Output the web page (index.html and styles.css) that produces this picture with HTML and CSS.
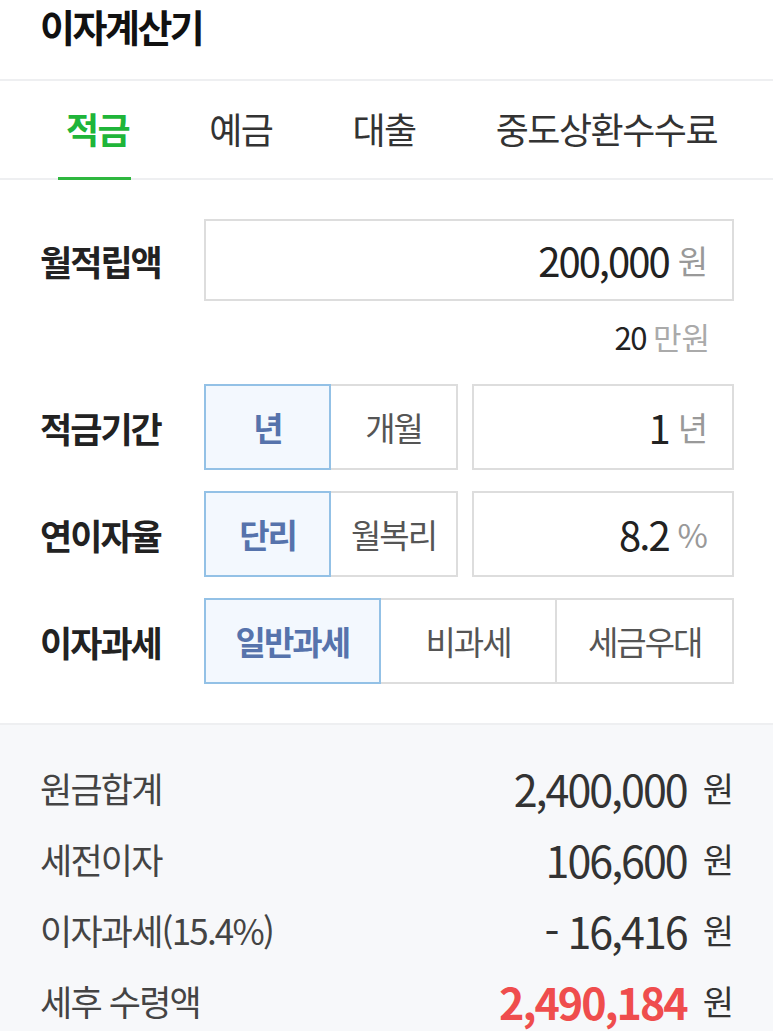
FILE: index.html
```html
<!DOCTYPE html>
<html lang="ko">
<head>
<meta charset="utf-8">
<link rel="stylesheet" href="styles.css">
</head>
<body>
<header class="header"><h1 class="title">이자계산기</h1></header>
<nav class="tabs">
  <div class="tab active">적금</div>
  <div class="tab">예금</div>
  <div class="tab">대출</div>
  <div class="tab">중도상환수수료</div>
</nav>
<section class="form">
  <div class="row">
    <div class="label">월적립액</div>
    <div class="field full"><span class="num">200,000</span><span class="unit">원</span></div>
  </div>
  <div class="hint"><span class="num">20</span><span class="unit">만원</span></div>
  <div class="row">
    <div class="label">적금기간</div>
    <div class="split">
      <div class="seg seg2"><div class="opt on">년</div><div class="opt">개월</div></div>
      <div class="field"><span class="num">1</span><span class="unit">년</span></div>
    </div>
  </div>
  <div class="row">
    <div class="label">연이자율</div>
    <div class="split">
      <div class="seg seg2"><div class="opt on">단리</div><div class="opt">월복리</div></div>
      <div class="field"><span class="num">8.2</span><span class="unit">%</span></div>
    </div>
  </div>
  <div class="row">
    <div class="label">이자과세</div>
    <div class="seg seg3"><div class="opt on">일반과세</div><div class="opt">비과세</div><div class="opt">세금우대</div></div>
  </div>
</section>
<section class="result">
  <div class="rrow"><span class="rlabel">원금합계</span><span class="rval"><span class="rnum">2,400,000</span><span class="runit">원</span></span></div>
  <div class="rrow"><span class="rlabel">세전이자</span><span class="rval"><span class="rnum">106,600</span><span class="runit">원</span></span></div>
  <div class="rrow"><span class="rlabel">이자과세(15.4%)</span><span class="rval"><span class="rnum">- 16,416</span><span class="runit">원</span></span></div>
  <div class="rrow"><span class="rlabel">세후 수령액</span><span class="rval"><span class="rnum red">2,490,184</span><span class="runit">원</span></span></div>
</section>
</body>
</html>
```

FILE: styles.css
```css
* { box-sizing: border-box; }
html, body { margin: 0; padding: 0; background: #fff; }
body {
  width: 773px;
  font-family: "Noto Sans CJK KR", "Noto Sans", sans-serif;
  color: #222;
}
.header {
  height: 81px;
  border-bottom: 2px solid #eeeff1;
  padding: 0 40px;
}
.title {
  margin: 0;
  font-size: 38px;
  font-weight: 700;
  letter-spacing: -2.5px;
  line-height: 52px;
  color: #111;
}
.tabs {
  display: flex;
  height: 99px;
  border-bottom: 2px solid #eeeff1;
  padding-left: 58px;
  gap: 64px;
}
.tab {
  position: relative;
  display: flex;
  align-items: center;
  padding: 0 8px 4px;
  font-size: 36px;
  letter-spacing: -1.5px;
  color: #333;
}
.tab.active {
  color: #1fb539;
  font-weight: 700;
}
.tab.active::after {
  content: "";
  position: absolute;
  left: 0; right: 6px; bottom: -2px;
  height: 3px;
  background: #2fb73f;
}
.form {
  padding: 39px 39px 39px 40px;
}
.row {
  display: grid;
  grid-template-columns: 164px 1fr;
  align-items: center;
  height: 86px;
}
.row + .row { margin-top: 21px; }
.label {
  font-size: 35px;
  font-weight: 700;
  letter-spacing: -2px;
  color: #222;
}
.field {
  height: 100%;
  border: 2px solid #dddddd;
  display: flex;
  align-items: center;
  justify-content: flex-end;
  padding-right: 24px;
  gap: 9px;
}
.row:first-child { height: 82px; }
.num {
  font-size: 40px;
  letter-spacing: -2px;
  color: #222;
}
.unit {
  font-size: 33px;
  color: #999;
}
.hint {
  height: 83px;
  display: flex;
  justify-content: flex-end;
  align-items: center;
  gap: 7px;
  padding: 0 24px 12px 0;
}
.hint .num { font-size: 31px; letter-spacing: -1.5px; }
.hint .unit { font-size: 31px; color: #aaa; }
.split {
  display: grid;
  grid-template-columns: 254px 1fr;
  gap: 14px;
  height: 100%;
}
.seg {
  display: grid;
  height: 100%;
}
.seg2 { grid-template-columns: 1fr 1fr; }
.seg3 { grid-template-columns: 1fr 1fr 1fr; }
.opt {
  display: flex;
  align-items: center;
  justify-content: center;
  border: 2px solid #dddddd;
  font-size: 33px;
  letter-spacing: -2px;
  color: #555;
}
.opt + .opt { border-left: none; }
.opt.on {
  background: #f3f8fe;
  border-color: #93c1e6;
  color: #5673ac;
  font-weight: 700;
}
.result {
  border-top: 2px solid #eeeff1;
  background: #f7f8fa;
  padding: 27px 39px 0 40px;
  min-height: 310px;
}
.rrow {
  display: flex;
  justify-content: space-between;
  align-items: center;
  height: 71px;
}
.rlabel {
  font-size: 35px;
  letter-spacing: -1.8px;
  color: #444;
}
.rval {
  display: flex;
  align-items: center;
  gap: 16px;
}
.rnum {
  font-size: 43px;
  letter-spacing: -2px;
  color: #333;
}
.rnum.red { color: #ef4d4d; font-weight: 700; }
.runit {
  font-size: 34px;
  color: #333;
}
```
